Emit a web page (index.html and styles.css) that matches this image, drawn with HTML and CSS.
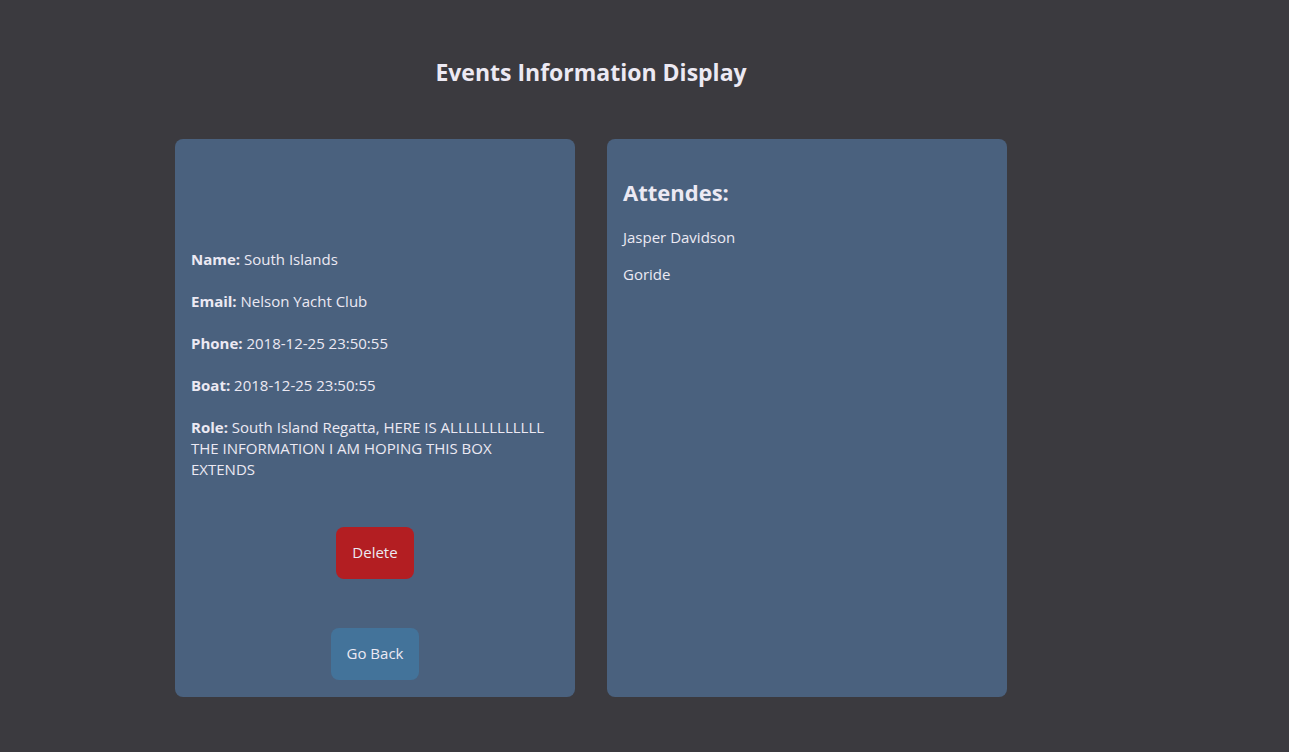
FILE: index.html
```html
<!DOCTYPE html>
<html lang="en">
<head>
<meta charset="utf-8">
<title>Events Information Display</title>
<link rel="stylesheet" href="styles.css">
</head>
<body>
<main class="page">
  <h1 class="title">Events Information Display</h1>
  <div class="cards">
    <section class="card card-info">
      <div class="card-spacer"></div>
      <p class="field"><b>Name:</b> South Islands</p>
      <p class="field"><b>Email:</b> Nelson Yacht Club</p>
      <p class="field"><b>Phone:</b> 2018-12-25 23:50:55</p>
      <p class="field"><b>Boat:</b> 2018-12-25 23:50:55</p>
      <p class="field"><b>Role:</b> South Island Regatta, HERE IS ALLLLLLLLLLLL THE INFORMATION I AM HOPING THIS BOX EXTENDS</p>
      <div class="actions">
        <button class="btn btn-delete">Delete</button>
        <button class="btn btn-back">Go Back</button>
      </div>
    </section>
    <section class="card card-attendees">
      <h2 class="card-heading">Attendes:</h2>
      <p class="attendee">Jasper Davidson</p>
      <p class="attendee">Goride</p>
    </section>
  </div>
</main>
</body>
</html>
```
FILE: styles.css
```css
html, body {
  margin: 0;
  padding: 0;
}
body {
  background: #3b3a3f;
  color: #ece9f3;
  font-family: "Open Sans", "Noto Sans", sans-serif;
  font-size: 15px;
  line-height: 21px;
}
.page {
  width: 832px;
  margin-left: 175px;
  padding-top: 56px;
}
.title {
  margin: 0;
  font-size: 23px;
  line-height: 32px;
  font-weight: 700;
  text-align: center;
}
.cards {
  display: flex;
  gap: 32px;
  margin-top: 51px;
}
.card {
  width: 400px;
  height: 558px;
  box-sizing: border-box;
  background: #4a617e;
  border-radius: 8px;
  padding: 16px;
  display: flex;
  flex-direction: column;
}
.card-spacer {
  height: 94px;
  flex-shrink: 0;
}
.field {
  margin: 0 0 21px;
  max-width: 360px;
}
.field:last-of-type {
  margin-bottom: 0;
}
.actions {
  margin-top: 47px;
  display: flex;
  flex-direction: column;
  align-items: center;
  gap: 49px;
}
.btn {
  font-family: inherit;
  font-size: 15px;
  line-height: 21px;
  color: #ece9f3;
  border: none;
  border-radius: 8px;
  padding: 15px 16px 16px;
  cursor: pointer;
}
.btn-delete {
  background: #b31e22;
}
.btn-back {
  background: #43739a;
}
.card-heading {
  margin: 24px 0 22px;
  font-size: 22px;
  line-height: 26px;
  font-weight: 700;
}
.attendee {
  margin: 0 0 16px;
}
```
